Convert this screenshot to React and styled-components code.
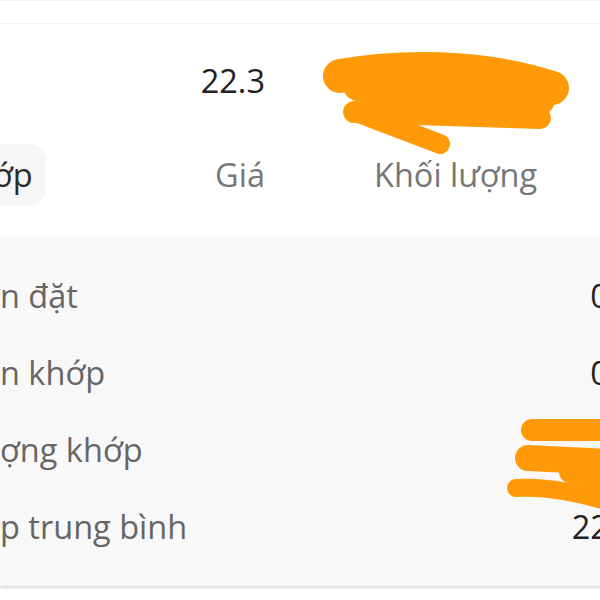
import React from "react";
import styled, { createGlobalStyle } from "styled-components";

const GlobalStyle = createGlobalStyle`
  html, body {
    margin: 0;
    padding: 0;
    background: #ffffff;
  }
  body {
    font-family: "Open Sans", "Noto Sans", sans-serif;
    overflow: hidden;
  }
`;

const ORANGE = "#fe9a07";

const rows = [
  { label: "n đặt", value: "0.0" },
  { label: "n khớp", value: "0.0" },
  { label: "ợng khớp", value: "" },
  { label: "p trung bình", value: "22.3" },
];

const App = () => {
  return (
    <Page>
      <GlobalStyle />
      <TopStrip />
      <Summary>
        <Cell />
        <Price>22.3</Price>
        <Cell />
        <Cell />
        <Tab>ớp</Tab>
        <HeadRight>Giá</HeadRight>
        <Cell />
        <Head>Khối lượng</Head>
      </Summary>
      <Panel>
        {rows.map((row) => (
          <Row key={row.label}>
            <Label>{row.label}</Label>
            <Value>{row.value}</Value>
          </Row>
        ))}
      </Panel>

      <Scribble $x={318} $y={52} width="256" height="110" viewBox="0 0 256 110">
        <g fill="none" stroke={ORANGE} strokeLinecap="round" strokeLinejoin="round">
          <path d="M 22 24 C 80 14, 160 12, 234 36" strokeWidth="34" />
          <path d="M 40 34 L 90 40" strokeWidth="30" />
          <path d="M 60 42 L 222 48" strokeWidth="30" />
          <path d="M 36 60 L 222 66" strokeWidth="22" />
          <path d="M 38 60 L 122 92" strokeWidth="20" />
        </g>
      </Scribble>

      <Scribble $x={500} $y={410} width="110" height="110" viewBox="0 0 110 110">
        <g fill="none" stroke={ORANGE} strokeLinecap="round" strokeLinejoin="round">
          <path d="M 32 20 L 110 20" strokeWidth="22" />
          <path d="M 28 48 L 110 52" strokeWidth="26" />
          <path d="M 70 62 L 110 72" strokeWidth="22" />
          <path d="M 16 78 C 50 76, 80 84, 110 92" strokeWidth="18" />
        </g>
      </Scribble>
    </Page>
  );
};

const Page = styled.div`
  position: relative;
  width: 600px;
  height: 600px;
  overflow: hidden;
  background: #ffffff;
`;

const TopStrip = styled.div`
  height: 22px;
  border-top: 1px solid #f3f3f3;
  border-bottom: 1px solid #f3f3f3;
`;

const Summary = styled.div`
  display: grid;
  grid-template-columns: 46px 219px 109px 1fr;
  grid-template-rows: 107px 86px;
  align-items: center;
  padding-bottom: 19px;
`;

const Cell = styled.div``;

const Price = styled.div`
  font-size: 32.5px;
  line-height: 1;
  color: #222222;
  text-align: right;
  padding-top: 8px;
`;

const Tab = styled.div`
  margin-left: -24px;
  height: 61px;
  display: flex;
  align-items: center;
  padding-left: 17px;
  background: #f6f6f6;
  border-radius: 18px;
  font-size: 32.5px;
  color: #2a2a2a;
`;

const Head = styled.div`
  font-size: 32.5px;
  color: #777777;
  white-space: nowrap;
`;

const HeadRight = styled(Head)`
  text-align: right;
`;

const Panel = styled.div`
  margin-right: -40px;
  padding: 21px 4px 21px 0;
  background: #f8f8f8;
  box-shadow: 0 2px 3px rgba(0, 0, 0, 0.14);
`;

const Row = styled.div`
  height: 77px;
  display: flex;
  align-items: center;
  justify-content: space-between;
`;

const Label = styled.span`
  font-size: 32.5px;
  color: #666666;
  white-space: nowrap;
`;

const Value = styled.span`
  font-size: 32.5px;
  color: #222222;
`;

const Scribble = styled.svg`
  position: absolute;
  left: ${(p) => p.$x}px;
  top: ${(p) => p.$y}px;
  overflow: visible;
`;

export default App;
